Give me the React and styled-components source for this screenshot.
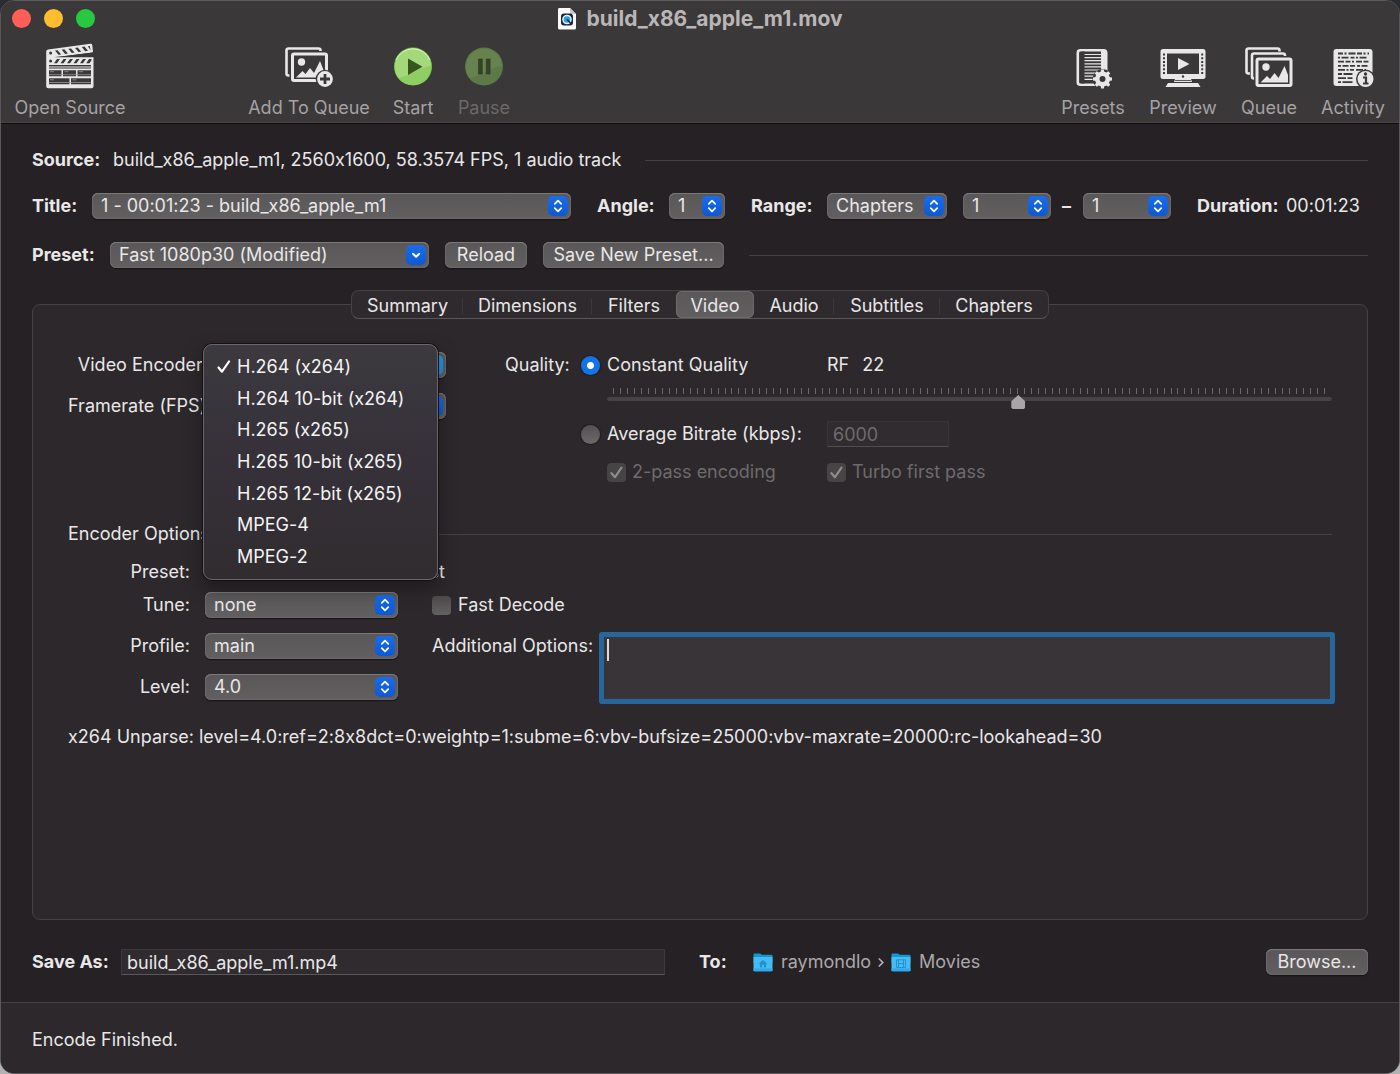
import React, { useState } from 'react';
import styled, { createGlobalStyle, css } from 'styled-components';

const GlobalStyle = createGlobalStyle`
  * {
    box-sizing: border-box;
  }

  body {
    margin: 0;
    background: linear-gradient(#2a2c30 0%, #2a2c30 50%, #b4b3b4 100%);
    color: #e9e7e8;
    font-family: Inter, 'Liberation Sans', sans-serif;
    font-size: 18px;
    font-feature-settings: 'calt' 0;
    line-height: 22px;
  }

  button, input, select, textarea {
    margin: 0;
    color: inherit;
    font: inherit;
    font-feature-settings: inherit;
  }
`;

const Window = styled.div`
  display: flex;
  flex-direction: column;
  min-height: 100vh;
  border: 1px solid #5b595b;
  border-radius: 14px;
  background-color: #252124;
  overflow: hidden;
`;

const Header = styled.header`
  background-color: #3b3839;
  border-bottom: 1px solid #0c0a0b;
  box-shadow: inset 0 -1px 0 #474445;
`;

const TitleBar = styled.div`
  display: grid;
  grid-template-columns: 1fr auto 1fr;
  align-items: center;
  height: 35px;
  padding: 0 11px;
`;

const WindowButtons = styled.div`
  display: flex;
  gap: 13px;
`;

const WindowButton = styled.button`
  width: 19px;
  height: 19px;
  padding: 0;
  border: none;
  border-radius: 50%;
  background-color: ${({ $color }) => $color};
`;

const WindowTitle = styled.h1`
  display: flex;
  align-items: center;
  gap: 9px;
  margin: 0;
  color: #b9b6b8;
  font-size: 21px;
  font-weight: 700;
`;

const Toolbar = styled.div`
  display: flex;
  justify-content: space-between;
  padding: 7px 15px 4px;
`;

const ToolGroup = styled.div`
  display: flex;
  gap: 26px;
`;

const ToolButton = styled.button`
  display: flex;
  flex-direction: column;
  align-items: center;
  gap: 8px;
  width: ${({ $width }) => $width}px;
  margin-right: ${({ $push }) => $push || 0}px;
  padding: 0;
  border: none;
  background: none;
  color: #a5a2a4;
  white-space: nowrap;

  &:disabled {
    color: #6b6869;
  }
`;

const Main = styled.main`
  display: flex;
  flex-direction: column;
  flex: 1;
  padding: 23px 31px 27px;
`;

const Row = styled.div`
  display: flex;
  align-items: center;
  min-height: 26px;
  margin-bottom: ${({ $bottom }) => $bottom || 0}px;
`;

const BoldLabel = styled.label`
  flex: none;
  width: ${({ $width }) => $width}px;
  margin-left: ${({ $left }) => $left || 0}px;
  font-weight: 700;
`;

const DurationValue = styled.time`
  flex: none;
  width: 82px;
`;

const Rule = styled.hr`
  flex: 1;
  height: 1px;
  margin: 0 0 0 ${({ $left }) => $left}px;
  border: none;
  background-color: #444143;
`;

const raised = css`
  border: none;
  border-radius: 6px;
  background: linear-gradient(#5a5759, #625f61);
  box-shadow: inset 0 1px 0 #7b787a, inset 0 0 0 1px #6c696b, 0 1px 1px #151214;
`;

const SelectBox = styled.div`
  position: relative;
  flex: ${({ $width }) => ($width ? 'none' : 1)};
  width: ${({ $width }) => ($width ? `${$width}px` : 'auto')};
  margin-left: ${({ $left }) => $left || 0}px;
`;

const SelectField = styled.select`
  ${raised}
  display: block;
  width: 100%;
  height: 26px;
  padding: 0 32px 0 9px;
  appearance: none;
  outline: none;
`;

const Chip = styled.span`
  position: absolute;
  top: 3px;
  right: 3px;
  width: 20px;
  height: 20px;
  border-radius: 5px;
  background: ${({ $bright }) => ($bright ? '#1d93e8' : 'linear-gradient(#1a6cea, #0d59d2)')};
  pointer-events: none;

  svg {
    display: block;
  }
`;

const PushButton = styled.button`
  ${raised}
  flex: none;
  width: ${({ $width }) => $width}px;
  height: 26px;
  margin-left: ${({ $left }) => $left || 0}px;
  padding: 0;
  white-space: nowrap;
`;

const Tabs = styled.div`
  position: relative;
  display: flex;
  align-self: center;
  height: 29px;
  margin-bottom: -15px;
  border: 1px solid #444143;
  border-bottom-color: #5a5759;
  border-radius: 8px;
  background-color: #2e2a2d;
`;

const Tab = styled.button`
  display: flex;
  align-items: center;
  justify-content: center;
  width: ${({ $width }) => $width}px;
  padding: 2px 0 0;
  border: none;
  background: none;

  ${({ $divider }) => $divider && css`
    &::after {
      content: '';
      width: 1px;
      height: 16px;
      margin-left: auto;
      background-color: #3c393b;
    }

    &::before {
      content: '';
      width: 1px;
      margin-right: auto;
    }
  `}

  &[aria-selected='true'] {
    ${raised}
    box-shadow: inset 0 0 0 1px #6c696b;
  }
`;

const Panel = styled.section`
  display: flex;
  flex-direction: column;
  flex: 1;
  margin-bottom: 29px;
  padding: 47px 35px 0;
  border: 1px solid #454244;
  border-radius: 8px;
  background-color: #2c282b;
`;

const VideoSettings = styled.div`
  display: flex;
  gap: 59px;
  margin-bottom: 39px;
`;

const FieldList = styled.div`
  display: flex;
  flex: none;
  flex-direction: column;
  gap: 15px;
`;

const Field = styled.div`
  position: relative;
  display: flex;
  align-items: center;
  gap: ${({ $gap }) => $gap}px;
`;

const FieldLabel = styled.label`
  flex: none;
  width: ${({ $width }) => $width}px;
  text-align: right;
  white-space: nowrap;
`;

const Menu = styled.ul`
  position: absolute;
  z-index: 2;
  top: -8px;
  left: 135px;
  display: flex;
  flex-direction: column;
  width: 235px;
  height: 236px;
  margin: 0;
  padding: 6px 0;
  border: 1px solid #6a676b;
  border-radius: 9px;
  background: linear-gradient(#3c393f 0%, #363139 50%, #312c2f 100%);
  box-shadow: 0 0 0 1px #121013, 0 8px 20px rgba(0, 0, 0, 0.35);
  list-style: none;
`;

const MenuItem = styled.li`
  display: flex;
  flex: 1;
  align-items: center;
  color: #f4f3f4;
`;

const MenuCheck = styled.span`
  width: 33px;
  padding-left: 12px;

  svg {
    display: block;
  }
`;

const Quality = styled.div`
  display: flex;
  flex: 1;
`;

const QualityLabel = styled.div`
  flex: none;
  width: 76px;
  padding-top: 2px;
`;

const QualityBody = styled.div`
  flex: 1;
`;

const ChoiceLabel = styled.label`
  display: flex;
  flex: none;
  align-items: center;
  gap: ${({ $gap }) => $gap}px;
  width: ${({ $width }) => ($width ? `${$width}px` : 'auto')};
  color: ${({ $muted }) => ($muted ? '#6e6b6d' : 'inherit')};
  white-space: nowrap;
`;

const Radio = styled.input`
  width: 19px;
  height: 19px;
  border-radius: 50%;
  background: linear-gradient(#545153, #6b686a);
  box-shadow: 0 0 1px 1px #201d1f;
  appearance: none;

  &:checked {
    background: radial-gradient(circle, #ffffff 3px, #1473e6 4px);
  }
`;

const CheckBox = styled.input`
  display: grid;
  width: 19px;
  height: 19px;
  border-radius: 4px;
  background: linear-gradient(#4c494b, #646163);
  appearance: none;

  &:disabled {
    background: #474446;
  }
`;

const CheckHolder = styled.span`
  display: grid;

  > * {
    grid-area: 1 / 1;
  }

  svg {
    pointer-events: none;
  }
`;

const Slider = styled.div`
  margin: 10px 0 17px 26px;
`;

const Ticks = styled.div`
  display: flex;
  justify-content: space-between;
  height: 6px;
  padding: 0 6px;

  span {
    width: 1px;
    background-color: #6c696b;
  }
`;

const Range = styled.input`
  display: block;
  width: 100%;
  height: 10px;
  background: none;
  appearance: none;
  direction: rtl;

  &::-webkit-slider-runnable-track {
    height: 4px;
    border-radius: 2px;
    background-color: #464245;
  }

  &::-webkit-slider-thumb {
    width: 14px;
    height: 14px;
    margin-top: -2px;
    background-color: #a8a5a7;
    clip-path: polygon(50% 0, 100% 45%, 100% 90%, 90% 100%, 10% 100%, 0 90%, 0 45%);
    appearance: none;
  }
`;

const PresetRange = styled(Range)`
  width: 196px;
  direction: ltr;

  &::-webkit-slider-thumb {
    height: 8px;
  }
`;

const BitrateInput = styled.input`
  width: 122px;
  height: 26px;
  padding: 0 5px;
  border: 1px solid #373336;
  border-bottom-color: #514e50;
  background-color: #302c2f;

  &:disabled {
    color: #6e6b6d;
  }
`;

const SubOptions = styled.div`
  display: flex;
  height: 20px;
  margin-top: 15px;
  padding-left: 26px;
`;

const EncoderPreset = styled.div`
  display: flex;
  align-items: center;
  height: 20px;
  margin: 15px 0 10px;
`;

const PresetName = styled.span`
  margin-left: 12px;
`;

const EncoderOptions = styled.div`
  display: flex;
  gap: 34px;
  margin-bottom: 25px;
`;

const ExtraOptions = styled.div`
  display: flex;
  flex: 1;
  flex-direction: column;
  gap: 15px;
`;

const AdditionalRow = styled.div`
  display: flex;
  align-items: flex-start;
  gap: 12px;

  label {
    width: 158px;
    padding-top: 2px;
    white-space: nowrap;
  }
`;

const OptionsBox = styled.div`
  position: relative;
  flex: 1;
  margin-top: 2px;
`;

const OptionsText = styled.textarea`
  display: block;
  width: 100%;
  height: 66px;
  padding: 3px;
  border: 2px solid #27669b;
  border-radius: 1px;
  outline: none;
  background-color: #383437;
  box-shadow: 0 0 0 3px #27669b;
  caret-color: transparent;
  resize: none;
`;

const Caret = styled.span`
  position: absolute;
  top: 4px;
  left: 5px;
  width: 2px;
  height: 22px;
  background-color: #dddcdd;
  pointer-events: none;
`;

const Unparse = styled.p`
  margin: 0;
`;

const SaveInput = styled.input`
  flex: none;
  width: 544px;
  height: 26px;
  padding: 0 5px;
  border: 1px solid #3c383b;
  border-bottom-color: #5a5759;
  outline: none;
  background-color: #2f2b2e;
`;

const PathList = styled.nav`
  display: flex;
  flex: 1;
  align-items: center;
  gap: 7px;
`;

const PathLink = styled.a`
  display: flex;
  align-items: center;
  gap: 8px;
  color: #aba8aa;
  text-decoration: none;
`;

const StatusBar = styled.footer`
  height: 71px;
  padding: 26px 31px 0;
  border-top: 1px solid #454244;
  background-color: #2c282b;
`;

const LIGHT = '#e9e8e9';
const DARK = '#3b3839';

const MovieFileIcon = () => (
  <svg width="20" height="24" viewBox="0 0 20 24">
    <path d="M2 1h11l6 6v14a1.500 1.500 0 0 1-1.500 1.500h-15A1.500 1.500 0 0 1 1 21V2.500A1.500 1.500 0 0 1 2 1z" fill="#fafafa" />
    <path d="M13 1l6 6h-6z" fill="#c9c8ca" />
    <rect x="4" y="6.500" width="12" height="12" rx="3" fill="#1c2732" />
    <circle cx="10" cy="12.500" r="4.800" fill="#e8f4fb" />
    <circle cx="10" cy="12.500" r="3.300" fill="#239ff0" />
    <path d="M10 12.500l4 4" stroke="#1c2732" strokeWidth="1.500" />
  </svg>
);

const ClapperIcon = () => (
  <svg width="48" height="46" viewBox="0 0 48 46">
    <path d="M2 6.400L44.500.700Q46 .500 46.200 2L47 8.400Q47 9.400 46 9.500L14 13.800 8 14H47.500V43.200q0 2-2 2H2.200q-2 0-2-2V8.600Q.200 6.700 2 6.400z" fill={LIGHT} />
    <path d="M8 14.200L47.500 9.600V14.200z" fill={DARK} />
    <g fill={DARK}>
      <circle cx="4.600" cy="10" r="1.500" />
      <circle cx="4.600" cy="18" r="1.500" />
      <path d="M9 7.600l2.600-.4 3.600 4.200-2.800.4zM15.700 6.700l2.600-.4 3.600 4.200-2.800.4zM22.400 5.800l2.600-.4 3.600 4.200-2.800.4zM29.100 4.900l2.600-.4 3.600 4.200-2.800.4zM35.800 4l2.600-.4 3.600 4.200-2.800.4zM41.800 3.200l2-.3.800 4.400z" />
      <path d="M11 16h3l-3 4.200H8zM17.500 16h3l-3 4.200h-3zM24 16h3l-3 4.200h-3zM30.500 16h3l-3 4.200h-3zM37 16h3l-3 4.200h-3zM43 16h2.500v1.200l-2 3h-3.300z" />
      <path d="M3 22h42v1.600H3zM3 24.600h42v1H3zM3 27.300h12.500v6H3zM17 27.300h13v6H17zM31.500 27.300H45v6H31.500zM3 35.300h20.500v6H3zM25 35.300h20v6H25z" />
    </g>
    <path d="M4 28.700h4M18.500 28.700h4M33 28.700h4M4 36.800h4M26.500 36.800h4M3 31.700h42M3 39.500h42" stroke="#a5a3a4" strokeWidth="0.700" />
  </svg>
);

const Photo = ({ x, y, w, h }) => (
  <g transform={`translate(${x} ${y})`}>
    <rect x="-1.500" y="-1.500" width={w + 3} height={h + 3} rx="4" fill={DARK} />
    <rect width={w} height={h} rx="3" fill={LIGHT} />
    <rect x="3" y="3" width={w - 6} height={h - 6} fill={DARK} />
    <circle cx="10.500" cy="9.500" r="3.700" fill={LIGHT} />
    <path d={`M5 ${h - 4.5}L11.500 ${h - 11}l3 3 4.500-6 4 5L29 8.500l${w - 33.5} 9V${h - 4.5}z`} fill={LIGHT} />
  </g>
);

const AddQueueIcon = () => (
  <svg width="48" height="46" viewBox="0 0 48 46">
    <rect x="1.500" y="5.500" width="34" height="27" rx="2" fill="none" stroke={LIGHT} strokeWidth="2.600" />
    <Photo x={6} y={9.5} w={37} h={29.5} />
    <circle cx="40" cy="36" r="9.300" fill={DARK} />
    <circle cx="40" cy="36" r="7.900" fill={LIGHT} />
    <path d="M40 31v10M35 36h10" stroke={DARK} strokeWidth="2.800" />
  </svg>
);

const StartIcon = () => (
  <svg width="48" height="46" viewBox="0 0 48 46">
    <circle cx="24" cy="23.500" r="19" fill="#74cc43" />
    <circle cx="24" cy="24" r="18" fill="#8fce63" />
    <path d="M6 24a18 18 0 0 1 36-1C34 23 18 34 9.500 35A18 18 0 0 1 6 24z" fill="#a3d97a" />
    <path d="M7 17a18.500 18.500 0 0 1 34 0" fill="none" stroke="#e0f5c8" strokeWidth="1" />
    <path d="M19 15.500v16.500l14.500-8.200z" fill="#36551f" />
  </svg>
);

const PauseIcon = () => (
  <svg width="48" height="46" viewBox="0 0 48 46">
    <circle cx="24" cy="23.500" r="19" fill="#577a3f" />
    <circle cx="24" cy="24" r="18" fill="#5d7947" />
    <path d="M6 24a18 18 0 0 1 36-1C34 23 18 34 9.500 35A18 18 0 0 1 6 24z" fill="#67824f" />
    <path d="M18.500 16h3.800v15h-3.800zM26.300 16h3.800v15h-3.800z" fill="#35432b" stroke="#2c3824" strokeWidth="0.600" />
  </svg>
);

const teeth = [0, 45, 90, 135, 180, 225, 270, 315];

const PresetsIcon = () => (
  <svg width="48" height="46" viewBox="0 0 48 46">
    <rect x="8.800" y="7.300" width="28.400" height="34.400" rx="2.500" fill={DARK} stroke={LIGHT} strokeWidth="2.600" />
    <path d="M32 8h5v33h-5z" fill={LIGHT} />
    <path d="M14 8.600v32" stroke={DARK} strokeWidth="3" />
    <path d="M15.500 11.500H32M15.500 14.600H32M15.500 17.700H32M15.500 20.800H32M15.500 23.900H32M15.500 27H32M15.500 30.100H32M15.500 33.200H28M15.500 36.300H25" stroke={LIGHT} strokeWidth="1.200" />
    <circle cx="33.500" cy="36" r="10" fill={DARK} />
    <g fill={LIGHT}>
      <circle cx="33.500" cy="36" r="7.500" />
      {teeth.map((angle) => (
        <path key={angle} d="M31.500 30l.6-3.500h2.800l.6 3.500z" transform={`rotate(${angle} 33.500 36)`} />
      ))}
    </g>
    <circle cx="33.500" cy="36" r="3" fill={DARK} />
  </svg>
);

const PreviewIcon = () => (
  <svg width="48" height="46" viewBox="0 0 48 46">
    <rect x="1.500" y="6" width="45" height="30" rx="2.500" fill={LIGHT} />
    <rect x="8" y="10.500" width="32" height="20.500" fill={DARK} />
    <path d="M5 10.500v21M43.200 10.500v21" stroke={DARK} strokeWidth="2" strokeDasharray="2 1.700" />
    <circle cx="24" cy="33.500" r="1.200" fill={DARK} />
    <path d="M19 15v12l11.500-6z" fill={LIGHT} />
    <path d="M16 36h16l1 3H15z" fill={LIGHT} />
    <path d="M9 40h30l2.500 4H6.500z" fill={LIGHT} />
    <path d="M16 37.500h16" stroke={DARK} strokeWidth="0.800" />
  </svg>
);

const QueueIcon = () => (
  <svg width="48" height="46" viewBox="0 0 48 46">
    <rect x="1.500" y="5.500" width="33" height="25" rx="2" fill={DARK} stroke={LIGHT} strokeWidth="2.600" />
    <rect x="5" y="8.500" width="37" height="30" rx="3.500" fill={DARK} />
    <rect x="7" y="10.500" width="33" height="25" rx="2" fill={DARK} stroke={LIGHT} strokeWidth="2.600" />
    <Photo x={10.5} y={14.5} w={37} h={29.5} />
  </svg>
);

const ActivityIcon = () => (
  <svg width="48" height="46" viewBox="0 0 48 46">
    <rect x="4.500" y="6" width="39" height="37" rx="3" fill={LIGHT} />
    <g stroke={DARK} strokeWidth="1.800">
      <path d="M9 10.500h31" strokeDasharray="5 1.500 2 2 7 1.500" />
      <path d="M9 14.600h30" strokeDasharray="2 1.500 7 2 4 1.500" />
      <path d="M9 18.700h31" strokeDasharray="6 1.500 5 1.500 2 2" />
      <path d="M9 22.800h30" strokeDasharray="3 1.500 6 1.500 5 2" />
      <path d="M9 26.900h28" strokeDasharray="7 1.500 2 1.500 4 2" />
      <path d="M9 31h16" strokeDasharray="4 1.500 9 1.500" />
      <path d="M9 35.100h15" strokeDasharray="8 1.500 5 2" />
      <path d="M9 39.200h15" strokeDasharray="3 1.500 10 2" />
    </g>
    <circle cx="36.500" cy="36" r="9.500" fill={DARK} />
    <circle cx="36.500" cy="36" r="8" fill={LIGHT} />
    <path d="M34 34.500h3v6M34 40.500h5.500" fill="none" stroke={DARK} strokeWidth="2.200" />
    <circle cx="36.500" cy="31" r="1.700" fill={DARK} />
  </svg>
);

const UpDownIcon = () => (
  <svg width="20" height="20" viewBox="0 0 20 20" fill="none" stroke="#fff" strokeWidth="1.800" strokeLinecap="round" strokeLinejoin="round">
    <path d="M6.800 7.800L10 4.700l3.200 3.100M6.800 12.200l3.200 3.100 3.200-3.100" />
  </svg>
);

const DownIcon = () => (
  <svg width="20" height="20" viewBox="0 0 20 20" fill="none" stroke="#fff" strokeWidth="2" strokeLinecap="round" strokeLinejoin="round">
    <path d="M7 8.800l3.100 3 3.100-3" />
  </svg>
);

const MenuCheckIcon = () => (
  <svg width="16" height="16" viewBox="0 0 16 16" fill="none" stroke="#fff" strokeWidth="2.200" strokeLinecap="round" strokeLinejoin="round">
    <path d="M2.500 8.500l3.500 4.200L13 2.500" />
  </svg>
);

const BoxCheckIcon = () => (
  <svg width="19" height="19" viewBox="0 0 19 19" fill="none" stroke="#8f8c8e" strokeWidth="2.200" strokeLinecap="round" strokeLinejoin="round">
    <path d="M4.500 10.200l3.500 4 6.500-9.500" />
  </svg>
);

const PathArrowIcon = () => (
  <svg width="6" height="11" viewBox="0 0 6 11" fill="none" stroke="#b4b1b3" strokeWidth="1.700">
    <path d="M.8 1.500l4 4-4 4" />
  </svg>
);

const FolderIcon = ({ home }) => (
  <svg width="20" height="19" viewBox="0 0 20 19">
    <path d="M.5 1.500Q.5.500 1.500.500h5.700l1.500 1.300h9.800q1 0 1 1V10H.5z" fill="#1795d2" />
    <path d="M.5 4h19v13.500q0 .8-1 .8h-17q-1 0-1-.8z" fill="#45bcf4" />
    <path d="M.5 15.500h19v2q0 .8-1 .8h-17q-1 0-1-.8z" fill="#2faae8" />
    {home ? (
      <path d="M5.500 10.800L10 7l4.500 3.800h-1.400v3.700h-2.200v-2.800H9v2.800H6.900v-3.700z" fill="#2292d0" />
    ) : (
      <path d="M5.500 6.800h9v7.700h-9zM7.500 6.800v7.700M12.500 6.800v7.700M7.500 10.600h5" fill="none" stroke="#2292d0" strokeWidth="1" />
    )}
  </svg>
);

const Select = ({ id, label, value, width, left, bright, combo }) => (
  <SelectBox $width={width} $left={left}>
    <SelectField id={id} aria-label={label} defaultValue={value}>
      <option>{value}</option>
    </SelectField>
    <Chip $bright={bright}>{combo ? <DownIcon /> : <UpDownIcon />}</Chip>
  </SelectBox>
);

const leftTools = [
  { name: 'Open Source', icon: <ClapperIcon />, width: 108, push: 101 },
  { name: 'Add To Queue', icon: <AddQueueIcon />, width: 116 },
  { name: 'Start', icon: <StartIcon />, width: 40 },
  { name: 'Pause', icon: <PauseIcon />, width: 50, disabled: true },
];

const rightTools = [
  { name: 'Presets', icon: <PresetsIcon />, width: 62 },
  { name: 'Preview', icon: <PreviewIcon />, width: 66 },
  { name: 'Queue', icon: <QueueIcon />, width: 54 },
  { name: 'Activity', icon: <ActivityIcon />, width: 62 },
];

const tabs = [
  { name: 'Summary', width: 111, divider: true },
  { name: 'Dimensions', width: 129, divider: true },
  { name: 'Filters', width: 84 },
  { name: 'Video', width: 78 },
  { name: 'Audio', width: 80, divider: true },
  { name: 'Subtitles', width: 106, divider: true },
  { name: 'Chapters', width: 108 },
];

const encoders = [
  'H.264 (x264)',
  'H.264 10-bit (x264)',
  'H.265 (x265)',
  'H.265 10-bit (x265)',
  'H.265 12-bit (x265)',
  'MPEG-4',
  'MPEG-2',
];

const tickMarks = Array.from({ length: 103 }, (_, i) => i);

const ToolItems = ({ items }) => (
  <ToolGroup>
    {items.map((tool) => (
      <ToolButton key={tool.name} type="button" $width={tool.width} $push={tool.push} disabled={tool.disabled}>
        {tool.icon}
        {tool.name}
      </ToolButton>
    ))}
  </ToolGroup>
);

const App = () => {
  const [activeTab, setActiveTab] = useState('Video');
  const [encoder, setEncoder] = useState(encoders[0]);
  const [quality, setQuality] = useState(22);

  return (
    <>
      <GlobalStyle />
      <Window>
        <Header>
          <TitleBar>
            <WindowButtons>
              <WindowButton type="button" aria-label="Close" $color="#ff5f57" />
              <WindowButton type="button" aria-label="Minimize" $color="#febc2e" />
              <WindowButton type="button" aria-label="Zoom" $color="#28c840" />
            </WindowButtons>
            <WindowTitle>
              <MovieFileIcon />
              build_x86_apple_m1.mov
            </WindowTitle>
          </TitleBar>
          <Toolbar>
            <ToolItems items={leftTools} />
            <ToolItems items={rightTools} />
          </Toolbar>
        </Header>

        <Main>
          <Row $bottom={20}>
            <BoldLabel as="span" $width={81}>Source:</BoldLabel>
            <span>build_x86_apple_m1, 2560x1600, 58.3574 FPS, 1 audio track</span>
            <Rule $left={24} />
          </Row>

          <Row $bottom={23}>
            <BoldLabel htmlFor="title" $width={60}>Title:</BoldLabel>
            <Select id="title" value="1 - 00:01:23 - build_x86_apple_m1" />
            <BoldLabel htmlFor="angle" $width={72} $left={26}>Angle:</BoldLabel>
            <Select id="angle" value="1" width={56} />
            <BoldLabel htmlFor="range" $width={76} $left={26}>Range:</BoldLabel>
            <Select id="range" value="Chapters" width={120} />
            <Select label="First chapter" value="1" width={88} left={16} />
            <BoldLabel as="span" $width={10} $left={11}>–</BoldLabel>
            <Select label="Last chapter" value="1" width={88} left={11} />
            <BoldLabel as="span" $width={89} $left={26}>Duration:</BoldLabel>
            <DurationValue>00:01:23</DurationValue>
          </Row>

          <Row $bottom={22}>
            <BoldLabel htmlFor="preset" $width={78}>Preset:</BoldLabel>
            <Select id="preset" value="Fast 1080p30 (Modified)" width={319} combo />
            <PushButton type="button" $width={82} $left={16}>Reload</PushButton>
            <PushButton type="button" $width={181} $left={16}>Save New Preset...</PushButton>
            <Rule $left={25} />
          </Row>

          <Tabs role="tablist">
            {tabs.map((tab) => (
              <Tab
                key={tab.name}
                type="button"
                role="tab"
                aria-selected={tab.name === activeTab}
                $width={tab.width}
                $divider={tab.divider}
                onClick={() => setActiveTab(tab.name)}
              >
                {tab.name}
              </Tab>
            ))}
          </Tabs>

          <Panel>
            <VideoSettings>
              <FieldList>
                <Field $gap={10}>
                  <FieldLabel htmlFor="encoder" $width={140}>Video Encoder:</FieldLabel>
                  <Select id="encoder" value={encoder} width={228} bright />
                  <Menu role="listbox" aria-label="Video Encoder">
                    {encoders.map((name) => (
                      <MenuItem
                        key={name}
                        role="option"
                        aria-selected={name === encoder}
                        onClick={() => setEncoder(name)}
                      >
                        <MenuCheck>{name === encoder && <MenuCheckIcon />}</MenuCheck>
                        {name}
                      </MenuItem>
                    ))}
                  </Menu>
                </Field>
                <Field $gap={10}>
                  <FieldLabel htmlFor="framerate" $width={140}>Framerate (FPS):</FieldLabel>
                  <Select id="framerate" value="30" width={228} />
                </Field>
              </FieldList>

              <Quality>
                <QualityLabel>Quality:</QualityLabel>
                <QualityBody>
                  <Row>
                    <ChoiceLabel $gap={7} $width={246}>
                      <Radio type="radio" name="quality" defaultChecked />
                      Constant Quality
                    </ChoiceLabel>
                    <ChoiceLabel as="span" $gap={13}>
                      <span>RF</span>
                      <span>{quality}</span>
                    </ChoiceLabel>
                  </Row>
                  <Slider>
                    <Ticks>
                      {tickMarks.map((tick) => <span key={tick} />)}
                    </Ticks>
                    <Range
                      type="range"
                      aria-label="Constant Quality RF"
                      min="0"
                      max="51"
                      value={quality}
                      onChange={(e) => setQuality(Number(e.target.value))}
                    />
                  </Slider>
                  <Row>
                    <ChoiceLabel $gap={7} $width={246}>
                      <Radio type="radio" name="quality" />
                      Average Bitrate (kbps):
                    </ChoiceLabel>
                    <BitrateInput aria-label="Average Bitrate (kbps)" defaultValue="6000" disabled />
                  </Row>
                  <SubOptions>
                    <ChoiceLabel $gap={6} $width={220} $muted>
                      <CheckHolder>
                        <CheckBox type="checkbox" defaultChecked disabled />
                        <BoxCheckIcon />
                      </CheckHolder>
                      2-pass encoding
                    </ChoiceLabel>
                    <ChoiceLabel $gap={6} $muted>
                      <CheckHolder>
                        <CheckBox type="checkbox" defaultChecked disabled />
                        <BoxCheckIcon />
                      </CheckHolder>
                      Turbo first pass
                    </ChoiceLabel>
                  </SubOptions>
                </QualityBody>
              </Quality>
            </VideoSettings>

            <Row>
              <span>Encoder Options:</span>
              <Rule $left={10} />
            </Row>

            <EncoderPreset>
              <Field $gap={15}>
                <FieldLabel htmlFor="encoder-preset" $width={122}>Preset:</FieldLabel>
                <PresetRange id="encoder-preset" type="range" min="0" max="9" defaultValue="4" />
              </Field>
              <PresetName>fast</PresetName>
            </EncoderPreset>

            <EncoderOptions>
              <FieldList>
                <Field $gap={15}>
                  <FieldLabel htmlFor="tune" $width={122}>Tune:</FieldLabel>
                  <Select id="tune" value="none" width={193} />
                </Field>
                <Field $gap={15}>
                  <FieldLabel htmlFor="profile" $width={122}>Profile:</FieldLabel>
                  <Select id="profile" value="main" width={193} />
                </Field>
                <Field $gap={15}>
                  <FieldLabel htmlFor="level" $width={122}>Level:</FieldLabel>
                  <Select id="level" value="4.0" width={193} />
                </Field>
              </FieldList>
              <ExtraOptions>
                <Row>
                  <ChoiceLabel $gap={7}>
                    <CheckBox type="checkbox" />
                    Fast Decode
                  </ChoiceLabel>
                </Row>
                <AdditionalRow>
                  <label htmlFor="additional">Additional Options:</label>
                  <OptionsBox>
                    <OptionsText id="additional" />
                    <Caret />
                  </OptionsBox>
                </AdditionalRow>
              </ExtraOptions>
            </EncoderOptions>

            <Unparse>
              x264 Unparse: level=4.0:ref=2:8x8dct=0:weightp=1:subme=6:vbv-bufsize=25000:vbv-maxrate=20000:rc-lookahead=30
            </Unparse>
          </Panel>

          <Row>
            <BoldLabel htmlFor="save-as" $width={89}>Save As:</BoldLabel>
            <SaveInput id="save-as" defaultValue="build_x86_apple_m1.mp4" />
            <BoldLabel as="span" $width={54} $left={34}>To:</BoldLabel>
            <PathList>
              <PathLink href="#raymondlo">
                <FolderIcon home />
                raymondlo
              </PathLink>
              <PathArrowIcon />
              <PathLink href="#movies">
                <FolderIcon />
                Movies
              </PathLink>
            </PathList>
            <PushButton type="button" $width={102}>Browse...</PushButton>
          </Row>
        </Main>

        <StatusBar>Encode Finished.</StatusBar>
      </Window>
    </>
  );
};

export default App;
